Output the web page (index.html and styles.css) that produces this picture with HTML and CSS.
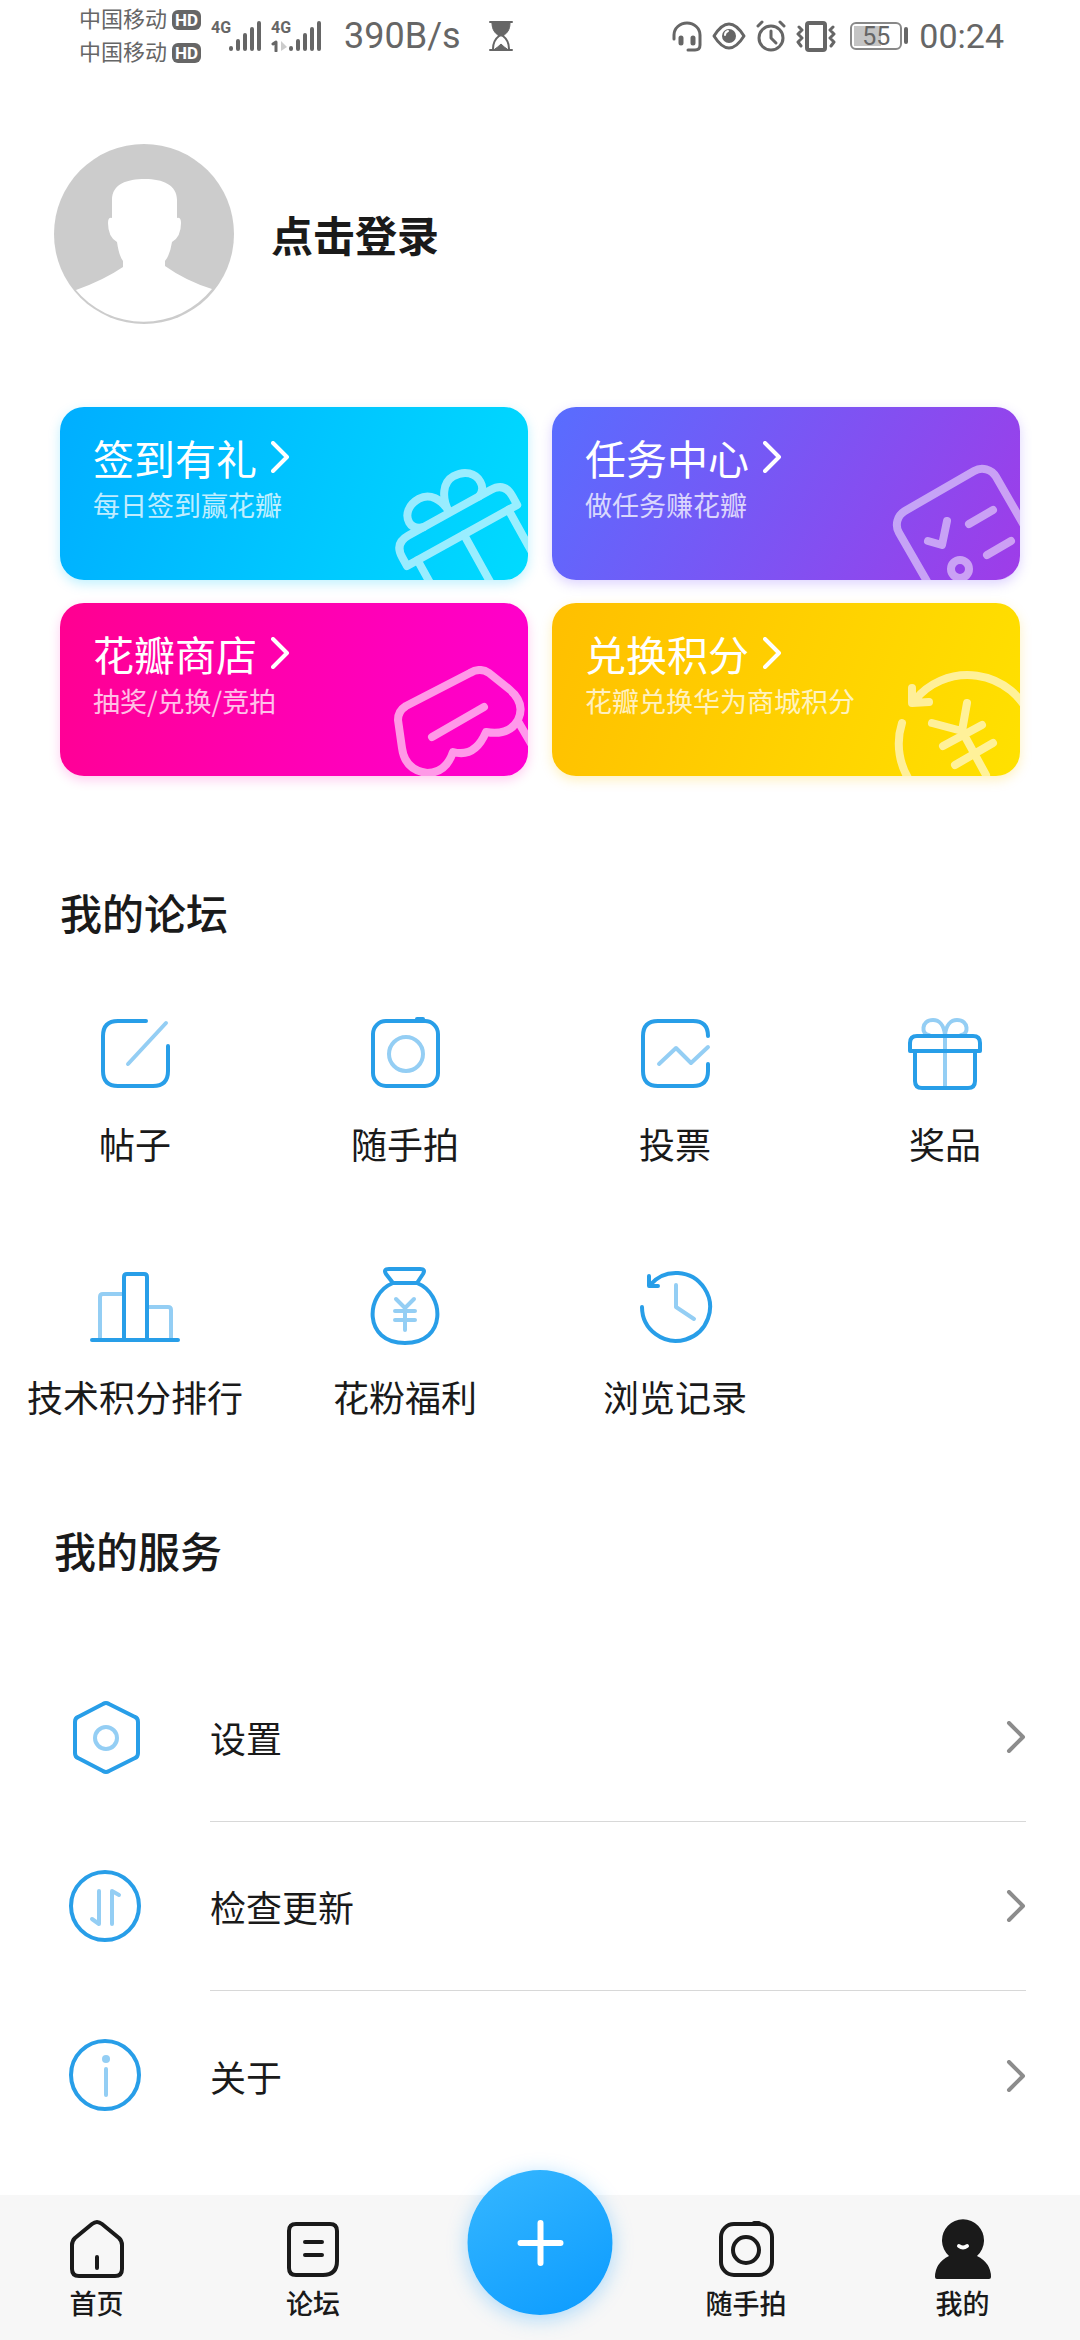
FILE: index.html
```html
<!DOCTYPE html>
<html lang="zh-CN">
<head>
  <meta charset="UTF-8">
  <meta name="viewport" content="width=device-width, initial-scale=1.0">
  <title>我的</title>
  <link rel="stylesheet" href="styles.css">
</head>
<body>
  <header class="statusbar">
    <div class="carriers">
      <div class="carrier">中国移动 <span class="hd">HD</span></div>
      <div class="carrier">中国移动 <span class="hd">HD</span></div>
    </div>
    <div class="signal">
      <span class="net">4G</span>
      <svg class="bars" width="50" height="32" viewBox="0 0 50 32"><path d="M20 29v-1M27 29v-8M34 29v-14M41 29v-20M48 29v-26"/></svg>
    </div>
    <div class="signal">
      <span class="net">4G</span>
      <svg class="bars" width="50" height="32" viewBox="0 0 50 32">
        <path d="M20 29v-1M27 29v-8M34 29v-14M41 29v-20M48 29v-26"/>
        <path class="sim" d="M2 24l3-2v9"/>
        <path class="sim-off" d="M10 21v10l6-4z"/>
      </svg>
    </div>
    <span class="speed">390B/s</span>
    <svg class="hourglass" width="24" height="32" viewBox="0 0 24 32">
      <path d="M1 2h22M1 30h22" stroke-width="2"/>
      <path d="M3 3h18c0 7-3 10-7 13h-4c-4-3-7-6-7-13z" fill="#666"/>
      <path d="M10 16c-4 3-6 7-6 13M14 16c4 3 6 7 6 13" stroke-width="2"/>
      <path d="M6 29q3-2 6-5 3 3 6 5z" fill="#666"/>
    </svg>
    <div class="status-right">
      <svg width="30" height="32" viewBox="0 0 30 32"><path d="M2 19v-4a13 12 0 0 1 26 0v10q0 5-5 5h-7" stroke-width="3"/><path d="M9 18v5M21 18v5" stroke-width="5"/></svg>
      <svg width="34" height="32" viewBox="0 0 34 32"><path d="M2 16q15-24 30 0q-15 24-30 0z" stroke-width="3"/><circle cx="17" cy="16" r="7" fill="#666" stroke="none"/><path d="M13 15q0-3 3-4" stroke="#fff" stroke-width="2"/></svg>
      <svg width="30" height="32" viewBox="0 0 30 32"><circle cx="15" cy="18" r="12" stroke-width="3"/><path d="M15 11v7l5 5" stroke-width="3"/><path d="M2 6l4-4M28 6l-4-4" stroke-width="3"/></svg>
      <svg width="40" height="32" viewBox="0 0 40 32"><rect x="11" y="3" width="18" height="27" rx="2" stroke-width="4"/><path d="M3 7l3 3-4 4 4 4-4 4 3 4M37 7l-3 3 4 4-4 4 4 4-3 4" stroke-width="3"/></svg>
      <div class="battery"><div class="battery-level"></div><span>55</span></div>
      <time class="clock">00:24</time>
    </div>
  </header>

  <main>
    <section class="profile">
      <svg class="avatar" viewBox="0 0 180 180">
        <circle cx="90" cy="90" r="90" fill="#ccc"/>
        <path d="M22 146q28-10 47-23v-6q-4-5-6-19-9-5-9-19 0-6 4-5v-18c0-16 15-21 33-21s32 6 32 21v18q4-1 4 5 0 14-9 19-2 13-7 19v5q21 15 47 23a88 88 0 0 1-137 0z" fill="#fff"/>
      </svg>
      <button class="login">点击登录</button>
    </section>

    <section class="cards">
      <a class="card card-sign" href="#">
        <h3>签到有礼<svg class="more" viewBox="0 0 20 32"><path d="M2 2l14 14L2 30"/></svg></h3>
        <p>每日签到赢花瓣</p>
        <svg class="art" viewBox="0 0 140 140">
          <g transform="translate(19 126) rotate(-29)">
            <path d="M0 0H126V-10Q126-26 110-26H16Q0-26 0-10Z"/>
            <path d="M12 0V90M116 0V90M65 0V90"/>
            <path d="M63-27C63-42 55-53 43-53C31-53 23-46 23-37C23-31 27-28 33-26M63-27C63-43 72-56 84-56C97-56 105-48 105-38C105-32 102-28 97-26"/>
          </g>
        </svg>
      </a>
      <a class="card card-task" href="#">
        <h3>任务中心<svg class="more" viewBox="0 0 20 32"><path d="M2 2l14 14L2 30"/></svg></h3>
        <p>做任务赚花瓣</p>
        <svg class="art" viewBox="0 0 140 140">
          <rect width="112" height="112" rx="16" transform="translate(11 79) rotate(-30)"/>
          <path d="M48 101l14 4 5-24M89 84l24-14M107 115l24-14"/>
          <circle cx="80" cy="129" r="9"/>
        </svg>
      </a>
      <a class="card card-shop" href="#">
        <h3>花瓣商店<svg class="more" viewBox="0 0 20 32"><path d="M2 2l14 14L2 30"/></svg></h3>
        <p>抽奖/兑换/竞拍</p>
        <svg class="art" viewBox="0 0 140 140">
          <path d="M10 84Q10 75 18 70L82 37Q92 31 101 37L121 53Q138 67 130 84Q121 100 98 96Q87 122 65 116Q58 137 39 137Q17 134 14 112Z"/>
          <path d="M44 101l52-30M131 87l14 24"/>
        </svg>
      </a>
      <a class="card card-points" href="#">
        <h3>兑换积分<svg class="more" viewBox="0 0 20 32"><path d="M2 2l14 14L2 30"/></svg></h3>
        <p>花瓣兑换华为商城积分</p>
        <svg class="art" viewBox="0 0 140 140">
          <path d="M35 64A68 68 0 0 1 150 80M22 87A68 68 0 0 0 32 148M32 52v15l17-1"/>
          <path d="M87 67l-5 28-30-8M82 95l24 44M63 110l39-21M75 129l38-22"/>
        </svg>
      </a>
    </section>

    <section class="forum">
      <h2>我的论坛</h2>
      <div class="forum-grid">
        <a href="#">
          <svg class="icon" viewBox="0 0 90 90"><path d="M56 13H28Q13 13 13 28V63Q13 78 28 78H63Q78 78 78 63V38"/><path class="light" d="M76 15L38 56"/></svg>
          帖子
        </a>
        <a href="#">
          <svg class="icon" viewBox="0 0 90 90"><rect x="13" y="13" width="65" height="65" rx="13"/><path d="M57 11h6"/><circle class="light" cx="46" cy="46" r="17"/></svg>
          随手拍
        </a>
        <a href="#">
          <svg class="icon" viewBox="0 0 90 90"><path d="M78 28Q78 13 63 13H28Q13 13 13 28V63Q13 78 28 78H63Q78 78 78 63V56"/><path class="light" d="M29 56l17-16 15 15 17-16"/></svg>
          投票
        </a>
        <a href="#">
          <svg class="icon" viewBox="0 0 90 90"><path class="light" d="M45 28V79M45 27C44 17 39 12 33 12C21 12 21 27 29 27M45 27C46 17 51 12 57 12C69 12 69 27 61 27"/><path d="M10 43V35Q10 28 17 28H73Q80 28 80 35V43ZM15 43V73Q15 80 22 80H68Q75 80 75 73V43"/></svg>
          奖品
        </a>
        <a href="#">
          <svg class="icon" viewBox="0 0 90 90"><path class="light" d="M10 77V36Q10 33 13 33H32M58 46H78Q81 46 81 49V77"/><path d="M2 79H88M34 78V16Q34 13 37 13H54Q57 13 57 16V78"/></svg>
          技术积分排行
        </a>
        <a href="#">
          <svg class="icon" viewBox="0 0 90 90"><path d="M33 22L26 13Q23 8 29 8H60Q66 8 63 13L57 22ZM33 22C5 33 3 82 45 82C87 82 85 33 57 22"/><path class="light" d="M36 38l9 9 9-9M45 47V69M35 50H55M35 59H55"/></svg>
          花粉福利
        </a>
        <a href="#">
          <svg class="icon" viewBox="0 0 90 90"><path d="M12 46A34 34 0 1 0 20 24M19 15V25H28"/><path class="light" d="M46 24V46L64 58"/></svg>
          浏览记录
        </a>
      </div>
    </section>

    <section class="services">
      <h2>我的服务</h2>
      <a class="service" href="#">
        <svg class="icon" viewBox="0 0 90 90"><path d="M43 11Q46 9 49 11L75 24Q78 25 78 29V60Q78 64 75 65L49 78Q46 80 43 78L18 65Q15 64 15 60V29Q15 25 18 24Z"/><circle class="light" cx="46" cy="45" r="11"/></svg>
        <span class="service-name">设置<svg class="arrow" viewBox="0 0 20 32"><path d="M3 2l14 14L3 30"/></svg></span>
      </a>
      <a class="service" href="#">
        <svg class="icon" viewBox="0 0 90 90"><circle cx="45" cy="44" r="34"/><path class="light" d="M39 29V62L32 57M52 62V29L59 33"/></svg>
        <span class="service-name">检查更新<svg class="arrow" viewBox="0 0 20 32"><path d="M3 2l14 14L3 30"/></svg></span>
      </a>
      <a class="service" href="#">
        <svg class="icon" viewBox="0 0 90 90"><circle cx="45" cy="44" r="34"/><path class="light" d="M46 38V64"/><circle cx="46" cy="28" r="4" fill="#94cef4" stroke="none"/></svg>
        <span class="service-name">关于<svg class="arrow" viewBox="0 0 20 32"><path d="M3 2l14 14L3 30"/></svg></span>
      </a>
    </section>
  </main>

  <nav class="tabbar">
    <a class="tab" href="#">
      <svg viewBox="0 0 64 64"><path d="M27 7Q32 3 37 7L54 21Q57 24 57 28V52Q57 59 50 59H14Q7 59 7 52V28Q7 24 10 21ZM32 40V51"/></svg>
      首页
    </a>
    <a class="tab" href="#">
      <svg viewBox="0 0 64 64"><path d="M15 7H49Q56 7 56 14V44Q56 58 42 58H15Q8 58 8 51V14Q8 7 15 7ZM24 25H41M24 38H41"/></svg>
      论坛
    </a>
    <button class="fab" aria-label="发布">
      <svg viewBox="0 0 64 64"><path d="M32 12V52M12 32H52"/></svg>
    </button>
    <a class="tab tab-photo" href="#">
      <svg viewBox="0 0 64 64"><rect x="7" y="7" width="51" height="51" rx="13"/><circle cx="32" cy="33" r="13"/><path d="M40 6H45"/></svg>
      随手拍
    </a>
    <a class="tab" href="#">
      <svg viewBox="0 0 64 64"><path d="M18 39A21 21 0 1 1 46 39Q60 46 60 60Q60 62 58 62H6Q4 62 4 60Q4 46 18 39Z" fill="#1a1a1a" stroke="none"/><path d="M28 29Q32 32 36 29" stroke="#fff"/></svg>
      我的
    </a>
  </nav>
</body>
</html>
```
FILE: styles.css
```css
:root {
  --text: #1a1a1a;
  --blue: #289ee8;
  --light-blue: #94cef4;
  --gray: #666;
}

* {
  box-sizing: border-box;
  margin: 0;
  padding: 0;
}

body {
  display: flex;
  flex-direction: column;
  min-height: 100vh;
  background-color: #fff;
  color: var(--text);
  font-family: 'Noto Sans CJK SC', sans-serif;
}

a {
  color: inherit;
  text-decoration: none;
}

button {
  border: none;
  background: none;
  color: inherit;
  font-family: inherit;
  cursor: pointer;
}

svg {
  flex: none;
  fill: none;
  stroke-linecap: round;
  stroke-linejoin: round;
}

/* Status bar */
.statusbar {
  display: flex;
  align-items: center;
  height: 72px;
  padding: 0 76px 0 79px;
  color: var(--gray);
  font-family: Roboto, 'Noto Sans CJK SC', sans-serif;
}

.statusbar svg {
  stroke: var(--gray);
}

.carrier {
  display: flex;
  align-items: center;
  gap: 5px;
  height: 33px;
  font-size: 22px;
  line-height: 30px;
  white-space: nowrap;
}

.hd {
  width: 29px;
  border-radius: 6px;
  background-color: var(--gray);
  color: #fff;
  font-size: 17px;
  font-weight: 700;
  line-height: 20px;
  text-align: center;
}

.signal {
  position: relative;
  width: 50px;
  height: 32px;
  margin-left: 10px;
}

.signal .net {
  position: absolute;
  top: 0;
  left: 0;
  font-size: 16px;
  font-weight: 700;
  line-height: 16px;
}

.bars {
  stroke-width: 4;
}

.statusbar .sim {
  stroke-width: 3;
}

.statusbar .sim-off {
  fill: #ccc;
  stroke: none;
}

.speed {
  margin-left: 23px;
  font-size: 36px;
}

.hourglass {
  margin-left: 28px;
}

.status-right {
  display: flex;
  align-items: center;
  gap: 10px;
  margin-left: auto;
}

.battery {
  position: relative;
  width: 52px;
  height: 28px;
  margin: 0 7px 0 4px;
  padding: 3px;
  border: 2px solid #888;
  border-radius: 6px;
  font-size: 25px;
  line-height: 20px;
  text-align: center;
}

.battery::after {
  content: '';
  position: absolute;
  top: 3px;
  right: -8px;
  width: 4px;
  height: 17px;
  border-radius: 2px;
  background-color: var(--gray);
}

.battery-level {
  position: absolute;
  top: 2px;
  bottom: 2px;
  left: 2px;
  width: 55%;
  background-color: #c4c4c4;
}

.battery span {
  position: relative;
}

.clock {
  font-size: 34px;
}

/* Profile */
.profile {
  display: flex;
  align-items: center;
  gap: 37px;
  padding: 72px 54px 0;
}

.avatar {
  width: 180px;
  height: 180px;
}

.login {
  font-size: 42px;
  font-weight: 700;
  line-height: 60px;
}

/* Cards */
.cards {
  display: grid;
  grid-template-columns: 1fr 1fr;
  gap: 23px 24px;
  margin-top: 83px;
  padding: 0 60px;
}

.card {
  position: relative;
  height: 173px;
  padding: 20px 33px;
  border-radius: 24px;
  color: #fff;
}

.card-sign {
  background: linear-gradient(110deg, #00aeff, #00dbff);
  box-shadow: 0 4px 12px rgba(0, 200, 255, 0.25);
}

.card-task {
  background: linear-gradient(120deg, #586dff, #9f3ce8);
  box-shadow: 0 4px 12px rgba(120, 80, 255, 0.25);
}

.card-shop {
  background: linear-gradient(110deg, #ff0090, #ff00d2);
  box-shadow: 0 4px 12px rgba(255, 0, 180, 0.2);
}

.card-points {
  background: linear-gradient(110deg, #ffbf00, #ffe100);
  box-shadow: 0 4px 12px rgba(255, 200, 0, 0.25);
}

.card h3 {
  display: flex;
  align-items: center;
  gap: 14px;
  font-size: 41px;
  font-weight: 400;
  line-height: 60px;
}

.card p {
  font-size: 27px;
  line-height: 36px;
  opacity: 0.75;
}

.more {
  width: 20px;
  height: 32px;
  stroke: #fff;
  stroke-width: 4;
}

.art {
  position: absolute;
  right: 0;
  bottom: 0;
  width: 140px;
  height: 140px;
  border-bottom-right-radius: 24px;
  stroke: #fff;
  stroke-width: 8;
  opacity: 0.6;
}

.card-task .art {
  opacity: 0.5;
}

/* Forum */
h2 {
  font-size: 42px;
  font-weight: 500;
  line-height: 60px;
}

.icon {
  width: 90px;
  height: 90px;
  stroke: var(--blue);
  stroke-width: 4;
}

.icon .light {
  stroke: var(--light-blue);
}

.forum {
  margin-top: 106px;
}

.forum h2 {
  padding: 0 60px;
}

.forum-grid {
  display: grid;
  grid-template-columns: repeat(4, 1fr);
  row-gap: 93px;
  margin-top: 66px;
}

.forum-grid a {
  display: flex;
  flex-direction: column;
  align-items: center;
  gap: 20px;
  font-size: 36px;
  line-height: 50px;
  white-space: nowrap;
}

/* Services */
.services {
  margin-top: 99px;
  padding: 0 54px 34px;
}

.services h2 {
  margin-bottom: 73px;
}

.service {
  display: flex;
  align-items: center;
  gap: 60px;
  height: 169px;
  padding-left: 6px;
}

.service-name {
  display: flex;
  flex: 1;
  align-items: center;
  justify-content: space-between;
  height: 169px;
  border-bottom: 1px solid #d8d8d8;
  font-size: 36px;
}

.service:last-child .service-name {
  border-bottom: none;
}

.arrow {
  width: 20px;
  height: 32px;
  stroke: #8c8c8c;
  stroke-width: 4;
}

/* Tab bar */
.tabbar {
  position: relative;
  display: grid;
  grid-template-columns: repeat(5, 145px);
  justify-content: space-between;
  height: 145px;
  margin-top: auto;
  padding: 22px 45px 0 24px;
  background-color: #f7f7f7;
}

.tab {
  display: flex;
  flex-direction: column;
  align-items: center;
  gap: 4px;
  font-size: 27px;
  font-weight: 500;
  line-height: 36px;
}

.tab svg {
  width: 64px;
  height: 64px;
  stroke: var(--text);
  stroke-width: 4;
}

.tab-photo {
  grid-column: 4;
}

.fab {
  position: absolute;
  top: -25px;
  left: 50%;
  display: flex;
  align-items: center;
  justify-content: center;
  width: 145px;
  height: 145px;
  border-radius: 50%;
  background: linear-gradient(150deg, #36b7ff, #0b9bff);
  box-shadow: 0 4px 20px rgba(30, 160, 255, 0.35);
  transform: translateX(-50%);
}

.fab svg {
  width: 64px;
  height: 64px;
  stroke: #fff;
  stroke-width: 6;
}
```
